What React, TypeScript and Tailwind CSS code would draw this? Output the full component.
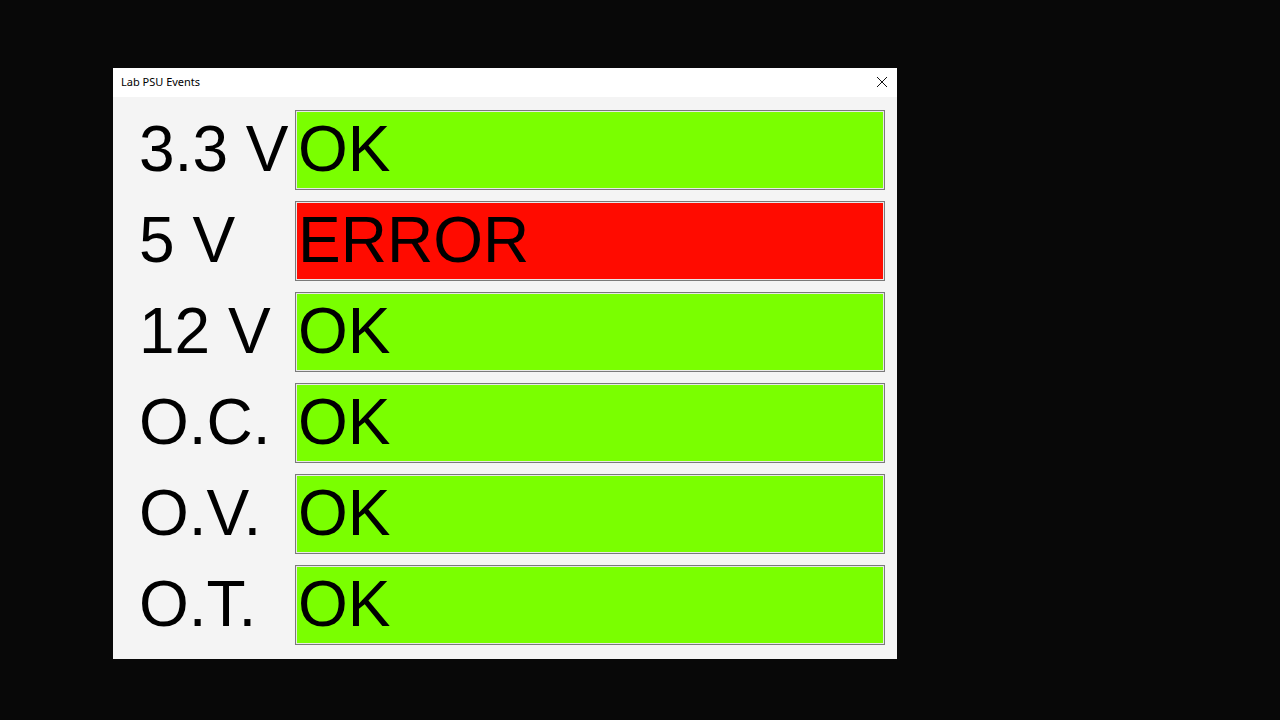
const rows: { label: string; ok: boolean }[] = [
  { label: '3.3 V', ok: true },
  { label: '5 V', ok: false },
  { label: '12 V', ok: true },
  { label: 'O.C.', ok: true },
  { label: 'O.V.', ok: true },
  { label: 'O.T.', ok: true },
];

export default function App() {
  return (
    <div className="w-[1280px] h-[720px] bg-[#080808] pt-[68px] pl-[113px] overflow-hidden">
      <div className="w-[784px] h-[591px] flex flex-col bg-[#f4f4f4]">
        <div className="h-[29px] bg-white flex items-center justify-between pl-[8px] pr-[9px]">
          <span className="text-[11px] text-black" style={{ fontFamily: '"Noto Sans", "Open Sans", sans-serif' }}>
            Lab PSU Events
          </span>
          <svg width="12" height="12" viewBox="0 0 12 12" className="mt-[-1px]">
            <path d="M1 1L11 11M11 1L1 11" stroke="#111" strokeWidth="1" />
          </svg>
        </div>
        <div
          className="flex-1 flex flex-col gap-[11px] pt-[13px] pr-[12px]"
          style={{ fontFamily: '"Liberation Sans", Arial, sans-serif' }}
        >
          {rows.map((r) => (
            <div key={r.label} className="flex items-center h-[80px]">
              <div className="w-[182px] pl-[26px] pb-[2px] text-[64px] leading-none text-black whitespace-nowrap">
                {r.label}
              </div>
              <div
                className={
                  'flex-1 h-[80px] flex items-center border border-[#7a7a7a] shadow-[inset_0_0_0_1px_#e8e8e8] pl-[2px] pb-[2px] text-[64px] leading-none text-black ' +
                  (r.ok ? 'bg-[#7aff00]' : 'bg-[#ff0b00]')
                }
              >
                {r.ok ? 'OK' : 'ERROR'}
              </div>
            </div>
          ))}
        </div>
      </div>
    </div>
  );
}
